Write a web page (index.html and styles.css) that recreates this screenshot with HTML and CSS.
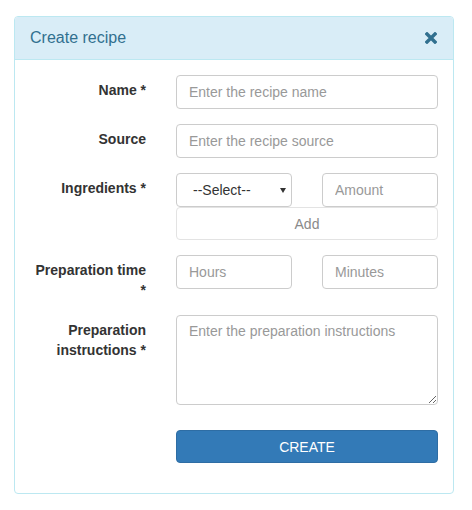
FILE: index.html
```html
<!DOCTYPE html>
<html>
<head>
<meta charset="utf-8">
<link rel="stylesheet" href="styles.css">
</head>
<body>
<div class="wrap">
  <div class="panel">
    <div class="panel-heading">
      <h3 class="panel-title">Create recipe</h3>
      <span class="close-icon">
        <svg width="12" height="12" viewBox="0 0 12 12"><path d="M2 2 L10 10 M10 2 L2 10" stroke="#31708f" stroke-width="3.4" stroke-linecap="square"/></svg>
      </span>
    </div>
    <div class="panel-body">
      <div class="form-group">
        <label class="control-label">Name *</label>
        <div class="controls"><input class="form-control" placeholder="Enter the recipe name"></div>
      </div>
      <div class="form-group">
        <label class="control-label">Source</label>
        <div class="controls"><input class="form-control" placeholder="Enter the recipe source"></div>
      </div>
      <div class="form-group">
        <label class="control-label">Ingredients *</label>
        <div class="controls">
          <div class="split">
            <div class="select-wrap"><select class="form-control select"><option>--Select--</option></select></div>
            <input class="form-control" placeholder="Amount">
          </div>
          <button class="btn-add" type="button">Add</button>
        </div>
      </div>
      <div class="form-group">
        <label class="control-label">Preparation time *</label>
        <div class="controls">
          <div class="split">
            <input class="form-control" placeholder="Hours">
            <input class="form-control" placeholder="Minutes">
          </div>
        </div>
      </div>
      <div class="form-group">
        <label class="control-label">Preparation instructions *</label>
        <div class="controls"><textarea class="form-control textarea" placeholder="Enter the preparation instructions"></textarea></div>
      </div>
      <div class="form-group submit-row">
        <div class="control-label"></div>
        <div class="controls"><button class="btn-primary" type="button">CREATE</button></div>
      </div>
    </div>
  </div>
</div>
</body>
</html>
```

FILE: styles.css
```css
* { box-sizing: border-box; }
html, body { margin: 0; padding: 0; background: #fff; }
body {
  font-family: "Liberation Sans", Arial, Helvetica, sans-serif;
  font-size: 14px;
  line-height: 20px;
  color: #333;
}
.wrap { padding: 16px 0 0 14px; }
.panel {
  width: 440px;
  border: 1px solid #bce8f1;
  border-radius: 4px;
  background: #fff;
}
.panel-heading {
  background: #d9edf7;
  border-bottom: 1px solid #bce8f1;
  border-radius: 3px 3px 0 0;
  height: 43px;
  padding: 0 16px 0 15px;
  display: flex;
  align-items: center;
  justify-content: space-between;
}
.panel-title {
  margin: 0;
  font-size: 16px;
  font-weight: normal;
  color: #31708f;
  line-height: 20px;
}
.close-icon { display: flex; width: 12px; height: 12px; }
.panel-body { padding: 15px; }
.form-group {
  display: flex;
  margin-bottom: 15px;
}
.control-label {
  width: 116px;
  flex: none;
  text-align: right;
  font-weight: bold;
  padding-top: 5px;
  line-height: 20px;
}
.controls {
  margin-left: 30px;
  width: 262px;
  flex: none;
}
.form-control {
  display: block;
  width: 100%;
  height: 34px;
  padding: 6px 12px;
  font-family: "Liberation Sans", Arial, Helvetica, sans-serif;
  font-size: 14px;
  line-height: 20px;
  color: #555;
  background: #fff;
  border: 1px solid #ccc;
  border-radius: 4px;
  outline: none;
  margin: 0;
}
.form-control::placeholder { color: #999; opacity: 1; }
.split {
  display: grid;
  grid-template-columns: 116px 116px;
  column-gap: 30px;
}
.select-wrap { position: relative; }
.select-wrap::after {
  content: "";
  position: absolute;
  left: 104px;
  top: 15px;
  border-left: 3.5px solid transparent;
  border-right: 3.5px solid transparent;
  border-top: 5px solid #333;
}
.select {
  -webkit-appearance: none;
  appearance: none;
  padding-left: 16px;
  color: #333;
}
.btn-add {
  display: block;
  width: 100%;
  height: 33px;
  margin: 0;
  background: #fff;
  border: 1px solid #e3e3e3;
  border-radius: 4px;
  font-family: "Liberation Sans", Arial, Helvetica, sans-serif;
  font-size: 14px;
  color: #8a8a8a;
  padding: 0;
}
.textarea {
  height: 90px;
  resize: vertical;
  padding-top: 5px;
}
.submit-row { padding-top: 10px; }
.btn-primary {
  display: block;
  width: 100%;
  height: 33px;
  padding: 0;
  margin: 0;
  background: #337ab7;
  border: 1px solid #2e6da4;
  border-radius: 4px;
  color: #fff;
  font-family: "Liberation Sans", Arial, Helvetica, sans-serif;
  font-size: 14px;
}
```
